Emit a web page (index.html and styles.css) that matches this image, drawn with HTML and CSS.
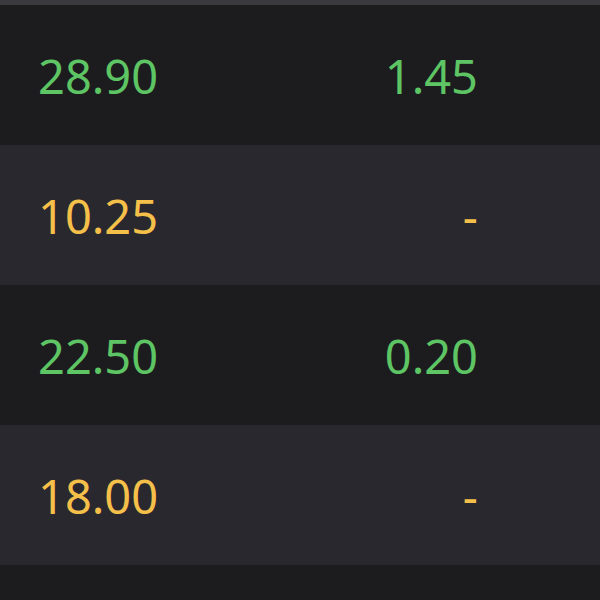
FILE: index.html
```html
<!DOCTYPE html>
<html lang="en">
<head>
  <meta charset="UTF-8" />
  <meta name="viewport" content="width=device-width, initial-scale=1.0"/>
  <title>Prices</title>
  <link rel="stylesheet" href="styles.css">
</head>
<body>
  <div class="top-strip"></div>

  <!-- price rows -->
  <div class="table">
    <div class="row">
      <span class="cell up">28.90</span>
      <span class="cell change up">1.45</span>
    </div>
    <div class="row alt">
      <span class="cell flat">10.25</span>
      <span class="cell change flat">-</span>
    </div>
    <div class="row">
      <span class="cell up">22.50</span>
      <span class="cell change up">0.20</span>
    </div>
    <div class="row alt">
      <span class="cell flat">18.00</span>
      <span class="cell change flat">-</span>
    </div>
    <div class="row"></div>
  </div>
</body>
</html>
```

FILE: styles.css
```css
html, body {
  height: 100%;
}

body {
  margin: 0;
  background: #1c1c1f;
  font-family: 'Noto Sans', sans-serif;
  overflow: hidden;
}

.top-strip {
  height: 5px;
  background: #3a3a3e;
}

.table {
  height: 595px;
  overflow: hidden;
}

.row {
  display: grid;
  grid-template-columns: 1fr 200px;
  align-items: center;
  height: 140px;
  padding: 3px 122px 0 38px;
  box-sizing: border-box;
  background: #1c1c1f;
}

.row.alt {
  background: #2a282f;
}

.cell {
  font-size: 47px;
  line-height: 1;
}

.change {
  text-align: right;
}

.up {
  color: #5ec564;
}

.flat {
  color: #f5c04a;
}
```
